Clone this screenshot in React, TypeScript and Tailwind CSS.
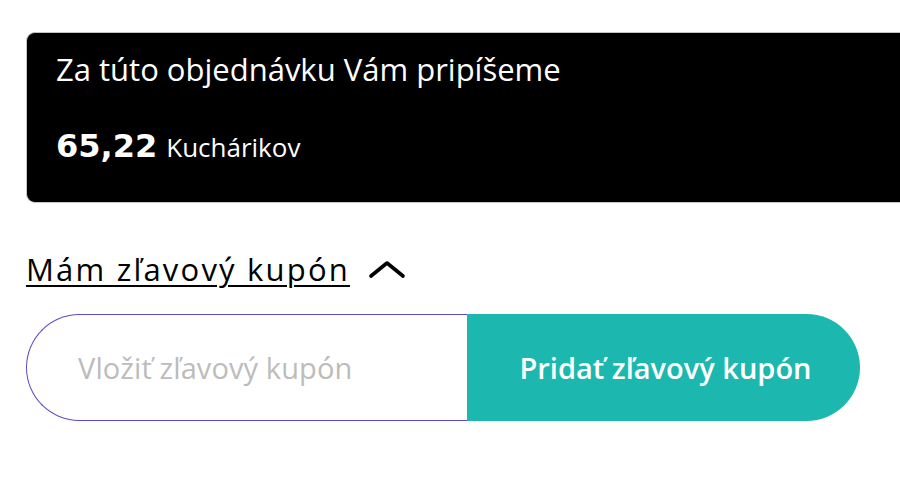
function Chevron() {
  return (
    <svg width="38" height="19" viewBox="0 0 38 19" fill="none" className="text-black">
      <polyline points="3,16 19,3 35,16" stroke="currentColor" strokeWidth="3.6" strokeLinecap="round" strokeLinejoin="round" />
    </svg>
  )
}

export default function App() {
  return (
    <div className="min-h-screen bg-white pt-[32px] pl-[26px] font-['Open_Sans',sans-serif]">
      <div className="h-[171px] rounded-l-[9px] bg-black border border-r-0 border-[#c4c4c4] pl-[29px] pt-[18px] text-white">
        <p className="text-[31px] leading-[36px]">Za túto objednávku Vám pripíšeme</p>
        <p className="mt-[41px] flex items-baseline gap-[9px] leading-[36px]">
          <span className="font-['DejaVu_Sans',sans-serif] text-[32px] font-bold">65,22</span>
          <span className="text-[26px] font-medium">Kuchárikov</span>
        </p>
      </div>

      <div className="mt-[46px] flex items-center gap-[18px]">
        <button className="text-[31px] leading-[40px] tracking-[2.2px] text-black underline underline-offset-[4px] decoration-[2px]">
          Mám zľavový kupón
        </button>
        <Chevron />
      </div>

      <div className="mt-[25px] flex w-[834px] h-[107px]">
        <input
          placeholder="Vložiť zľavový kupón"
          className="w-[441px] h-full rounded-l-full border border-r-0 border-[#5a4cc0] pl-[51px] text-[29px] tracking-[0.1px] text-black placeholder:text-[#bcbcbc] outline-none"
        />
        <button className="flex-1 h-full rounded-r-full bg-[#1cb8b0] text-white text-[29px] font-semibold pl-[4px]">
          Pridať zľavový kupón
        </button>
      </div>
    </div>
  )
}
